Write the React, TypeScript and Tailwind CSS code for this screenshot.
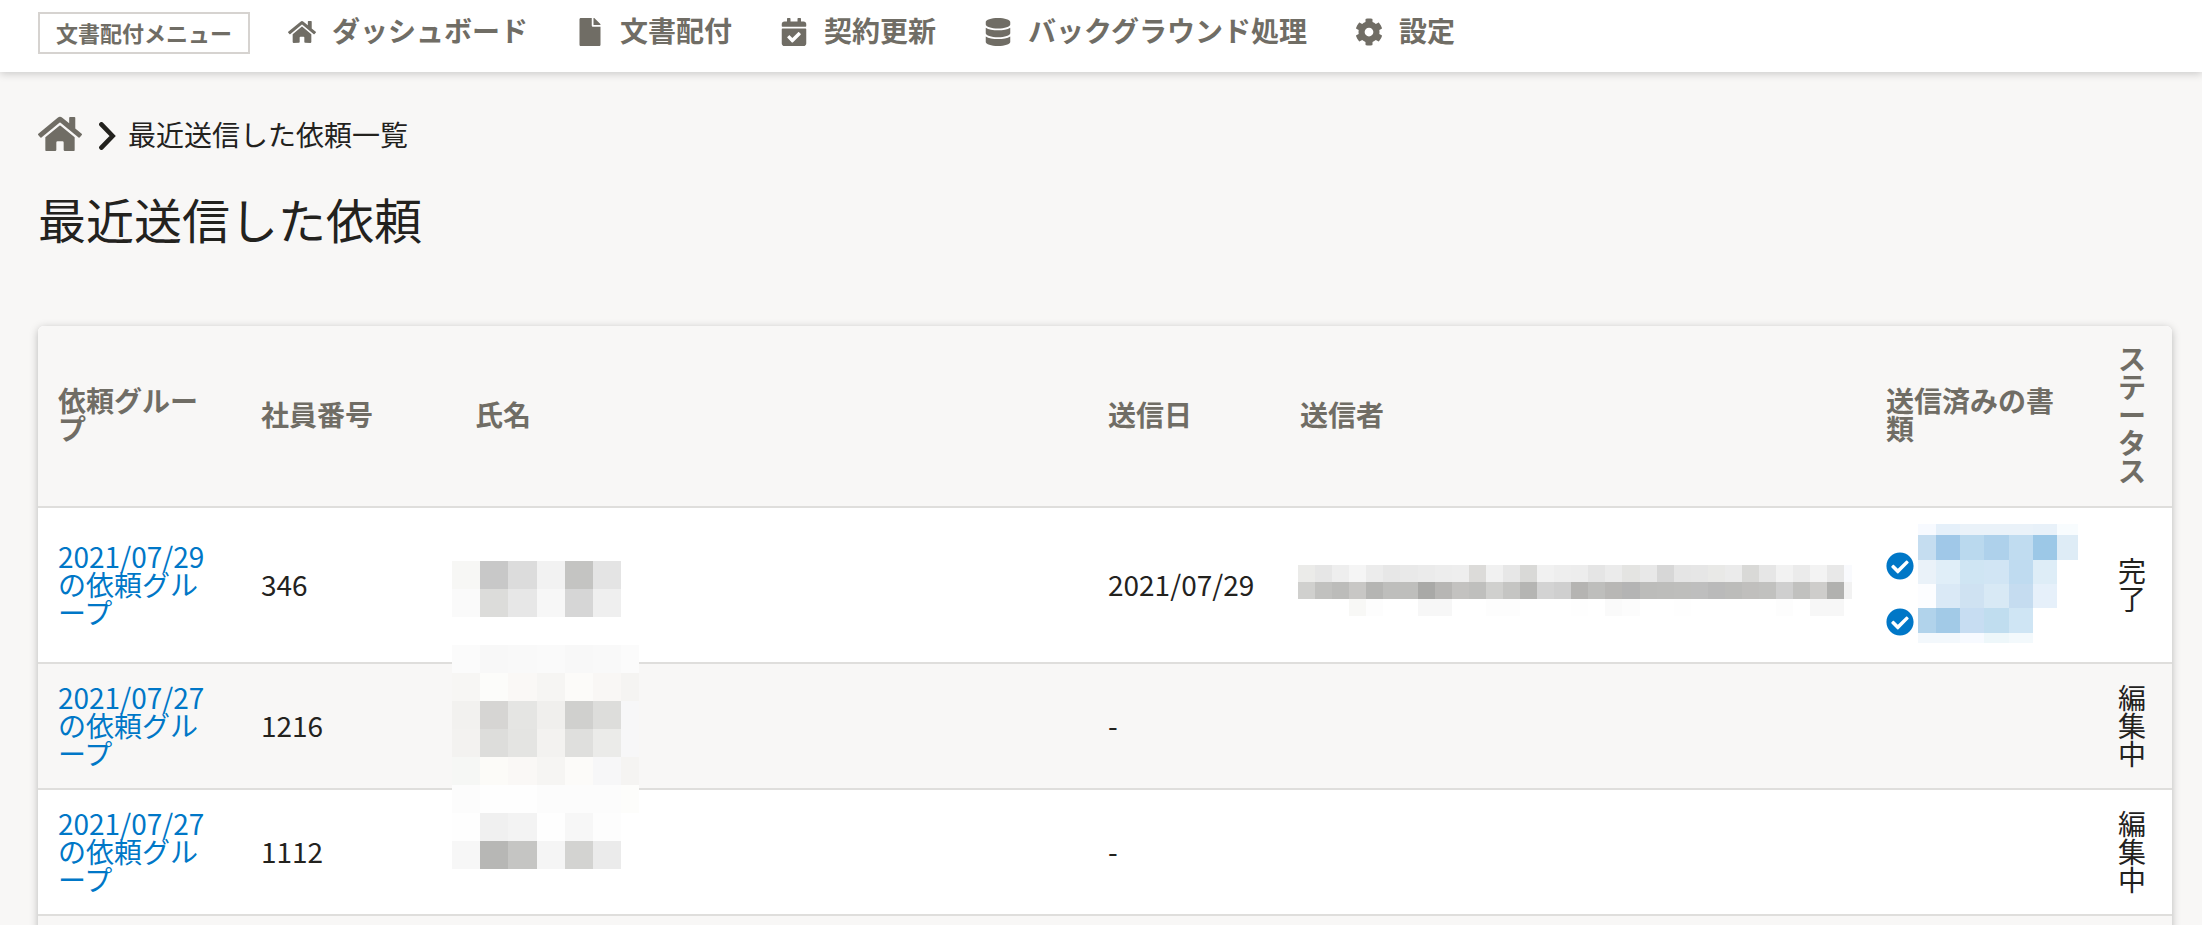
import type { ReactNode } from 'react';
import {
  FaCalendarCheck,
  FaCheckCircle,
  FaCog,
  FaDatabase,
  FaFile,
  FaHome,
} from 'react-icons/fa';

type MosaicProps = {
  xs: number[];
  ys: number[];
  rows: string[];
  label: string;
  className?: string;
};

/* Pixelated block that hides personal data. "-" leaves a cell clear. */
function Mosaic({ xs, ys, rows, label, className = '' }: MosaicProps) {
  const width = xs[xs.length - 1];
  const height = ys[ys.length - 1];
  return (
    <svg
      role="img"
      aria-label={label}
      width={width}
      height={height}
      viewBox={`0 0 ${width} ${height}`}
      shapeRendering="crispEdges"
      className={`block shrink-0 ${className}`}
    >
      {rows.flatMap((row, r) =>
        row.split(' ').map((color, c) =>
          color === '-' ? null : (
            <rect
              key={`${r}-${c}`}
              x={xs[c]}
              y={ys[r]}
              width={xs[c + 1] - xs[c]}
              height={ys[r + 1] - ys[r]}
              fill={`#${color}`}
            />
          ),
        ),
      )}
    </svg>
  );
}

const nameXs = [0, 28, 56, 85, 113, 141, 169, 187];
const nameYs = [0, 28, 56, 84, 112, 140, 168, 196, 224, 252, 280, 308];
const nameRows = [
  'f7f7f5 c8c8c8 dcdcdc f2f2f2 c4c4c2 e4e4e4',
  'fafafa dcdcda e7e7e7 f7f7f7 d6d6d6 efefef',
  '-',
  'fbfbfb f8f8f8 f9f9f9 fafafa f8f8f8 f9f9f9 fbfbfb',
  'f7f6f4 fcfcfa faf8f6 f6f5f3 fcfbf9 f9f7f5 f5f4f2',
  'f2f1ef d6d5d3 e5e5e3 f0efed d0d0ce dddddb f7f7f8',
  'f3f2f0 dddddb e4e4e2 f3f2f0 dfdfdd ebebe9 f7f7f8',
  'f6f7f5 fcfbf8 faf8f6 f6f5f3 fcfbf9 f7f7f8 f5f4f2',
  'fcfcfc fefefe fefefe fcfcfc fcfcfc fcfcfc fdfdfb',
  'fefefe f0f0f0 f3f3f3 fefefe f7f7f7 fdfdfd',
  'f7f7f7 b7b7b5 c5c5c3 f5f5f5 d3d3d1 ebebeb',
];

const senderXs = [
  0, 17, 34, 51, 68, 85, 102, 120, 137, 154, 171, 188, 205, 222, 239, 256, 273, 290, 307, 324, 342,
  359, 376, 393, 410, 427, 444, 461, 478, 495, 512, 529, 546, 554,
];
const senderYs = [0, 11, 28, 45, 62];
const senderRows = [
  '-',
  'ebebe9 e6e6e6 eeeeee f5f5f5 ececec e7e7e7 e9e9e9 ebebeb ededed eeeeee dcdbd9 f1f1f1 e7e7e7 d9d9d7 f1f1f1 eeeeee ededed e5e5e5 ebebeb e4e4e2 e8e8e8 d7d7d7 e5e5e5 e6e6e6 e9e9e7 ebebeb d9d9d7 e6e6e6 f2f2f2 ebebeb f3f3f3 e8e8e8 f9fafd',
  'd0d0ce c1c1bf bcbcba c8c7c5 b5b5b3 bebebc bebebc a9a9a7 b7b6b4 c3c2c0 bfbfbd d0d0ce c5c5c3 b5b5b3 d3d3d3 cfcfcf b5b4b2 bebebc b8b7b5 b4b4b4 bcbcba bdbdbb bebebc bebebe bababa bcbcba c0bfbd c1c1bf cfcfcf c1c1bf cecdcb b1b1af f2f2f2',
  '- - - f8f8f6 fdfdfd - - f7f7f7 f7f7f7 - - fdfdfd fdfdfd - - - fefefe - fafafa fcfcfc - - fefefe - - - - - fdfdfd - f7f7f7 f7f7f7',
];

const documentXs = [0, 18, 42, 66, 91, 115, 139, 160];
const documentYs = [0, 11, 36, 60, 84, 109, 119];
const documentRows = [
  'f7faff e5f0fa eaf2f9 eaf2f9 eaf2f9 e8f1f9 f8fcfe',
  'c5ddf0 a0c8e8 bad9ee aed1eb c0dcf0 9cc8e7 deecf6',
  'eaf2f9 e0eef8 cfe5f3 d1e5f4 bfdbf0 deedf7',
  'fcfdff dae9f6 cfe2f2 d8e9f5 c5dcf0 e6f0fa',
  'b1d3eb a2cae7 c7ddf2 c0ddef cfe5f4',
  'f3f8fc f3f8fc f7faff eef7fa f3f9fc',
];

const navItems = [
  { label: 'ダッシュボード', icon: FaHome },
  { label: '文書配付', icon: FaFile },
  { label: '契約更新', icon: FaCalendarCheck },
  { label: 'バックグラウンド処理', icon: FaDatabase },
  { label: '設定', icon: FaCog },
];

const columns = [
  { label: '依頼グループ', width: 'w-[203px]' },
  { label: '社員番号', width: 'w-[214px]' },
  { label: '氏名', width: '' },
  { label: '送信日', width: 'w-[192px]' },
  { label: '送信者', width: 'w-[586px]' },
  { label: '送信済みの書類', width: 'w-[232px]' },
  { label: 'ステータス', width: 'w-[74px]' },
];

type Request = {
  group: string;
  employee: string;
  sentOn: string;
  status: string;
  sender?: ReactNode;
  documents?: ReactNode;
};

const requests: Request[] = [
  {
    group: '2021/07/29の依頼グループ',
    employee: '346',
    sentOn: '2021/07/29',
    status: '完了',
    sender: <Mosaic xs={senderXs} ys={senderYs} rows={senderRows} label="送信者" />,
    documents: (
      <div className="flex items-center gap-1">
        <div className="flex flex-col gap-7 pt-5">
          <FaCheckCircle className="size-7 text-[#0077c7]" />
          <FaCheckCircle className="size-7 text-[#0077c7]" />
        </div>
        <Mosaic xs={documentXs} ys={documentYs} rows={documentRows} label="送信済みの書類" />
      </div>
    ),
  },
  { group: '2021/07/27の依頼グループ', employee: '1216', sentOn: '-', status: '編集中' },
  { group: '2021/07/27の依頼グループ', employee: '1112', sentOn: '-', status: '編集中' },
];

export default function App() {
  return (
    <div className="flex h-screen flex-col overflow-hidden bg-[#f8f7f6] font-['Noto_Sans_CJK_JP',sans-serif] text-[28px] leading-7 text-[#23221e]">
      <header className="relative flex items-start gap-[38px] bg-white px-[38px] pt-3 pb-[18px] font-bold text-[#706d65] shadow-[0_2px_8px_rgba(0,0,0,0.18)]">
        <button
          type="button"
          className="h-[42px] border-2 border-[#d6d3d0] px-4 pb-0.5 text-[22px] leading-7 whitespace-nowrap"
        >
          文書配付メニュー
        </button>
        <nav className="flex gap-12 pt-1.5">
          {navItems.map(({ label, icon: Icon }) => (
            <a key={label} href="#" className="flex items-start gap-4 whitespace-nowrap">
              <Icon className="size-7" />
              <span className="-mt-0.5">{label}</span>
            </a>
          ))}
        </nav>
      </header>

      <main className="pr-[30px] pl-[38px]">
        <nav aria-label="パンくず" className="flex items-center pt-10">
          <a href="#" aria-label="ホーム">
            <FaHome className="size-11 text-[#706d65]" />
          </a>
          <svg width="18" height="28" viewBox="0 0 18 28" className="ml-4 mt-1" aria-hidden="true">
            <path
              d="M3.4 2.4 L14.6 14 L3.4 25.6"
              fill="none"
              stroke="currentColor"
              strokeWidth="4.6"
              strokeLinecap="round"
              strokeLinejoin="miter"
            />
          </svg>
          <span className="ml-3">最近送信した依頼一覧</span>
        </nav>

        <h1 className="mt-9 text-[48px] leading-[52px]">最近送信した依頼</h1>

        <div className="relative mt-[82px] rounded-t-md shadow-[0_2px_8px_rgba(0,0,0,0.26)]">
          <table className="w-full table-fixed border-separate border-spacing-0 overflow-hidden rounded-t-md bg-white text-left">
            <thead className="bg-[#f8f7f6] text-[#706d65]">
              <tr>
                {columns.map(({ label, width }) => (
                  <th
                    key={label}
                    scope="col"
                    className={`px-5 pt-[18px] pb-[22px] align-middle font-bold break-all ${width}`}
                  >
                    {label}
                  </th>
                ))}
              </tr>
            </thead>
            <tbody>
              {requests.map((request, index) => (
                <tr key={index} className="h-[126px] first:h-[156px] even:bg-[#f8f7f6] [&>td]:border-t-2 [&>td]:border-[#dfdedc]">
                  <td className="px-5 pb-[3px] align-middle break-all text-[#0077c7]">
                    <a href="#">{request.group}</a>
                  </td>
                  <td className="px-5 pb-[3px] align-middle">{request.employee}</td>
                  <td />
                  <td className="px-5 pb-[3px] align-middle">{request.sentOn}</td>
                  <td className="pl-[18px] align-middle">{request.sender}</td>
                  <td className="px-5 pb-[3px] align-middle">{request.documents}</td>
                  <td className="px-5 pb-[3px] align-middle break-all">{request.status}</td>
                </tr>
              ))}
              <tr className="h-[126px] bg-[#f8f7f6]">
                <td colSpan={7} className="border-t-2 border-[#dfdedc]" />
              </tr>
            </tbody>
          </table>
          <Mosaic
            xs={nameXs}
            ys={nameYs}
            rows={nameRows}
            label="氏名"
            className="absolute top-[235px] left-[414px]"
          />
        </div>
      </main>
    </div>
  );
}
